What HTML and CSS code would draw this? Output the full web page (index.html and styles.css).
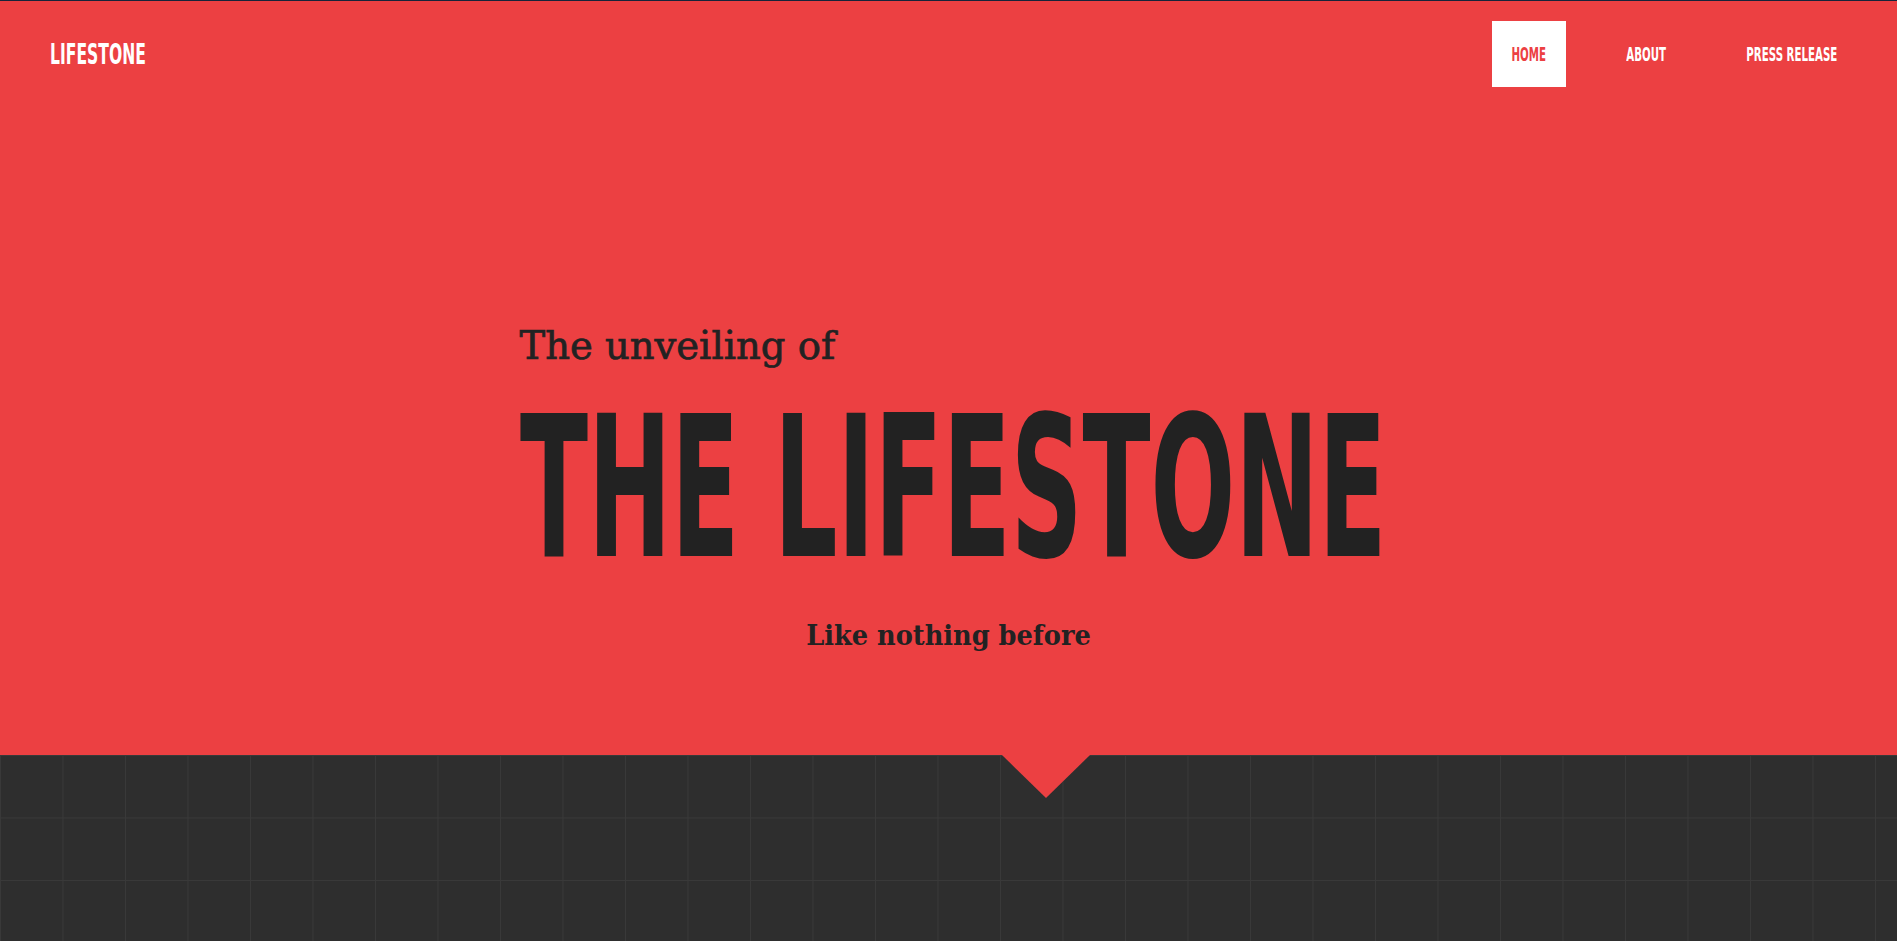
FILE: index.html
```html
<!DOCTYPE html>
<html lang="en">
<head>
<meta charset="utf-8">
<title>Lifestone</title>
<link rel="stylesheet" href="styles.css">
</head>
<body>
<section class="hero">
  <header class="topbar">
    <a class="logo" href="#"><span class="squeeze">LIFESTONE</span></a>
    <nav class="nav">
      <a class="nav-link nav-home active" href="#"><span class="squeeze">HOME</span></a>
      <a class="nav-link nav-about" href="#"><span class="squeeze">ABOUT</span></a>
      <a class="nav-link nav-press" href="#"><span class="squeeze">PRESS RELEASE</span></a>
    </nav>
  </header>
  <div class="intro">
    <p class="pre">The unveiling of</p>
    <h1 class="title"><span class="title-text">THE LIFESTONE</span></h1>
    <p class="tagline">Like nothing before</p>
  </div>
</section>
<section class="grid-area">
  <div class="pointer"></div>
</section>
</body>
</html>
```

FILE: styles.css
```css
html, body {
  margin: 0;
  padding: 0;
}
body {
  background: #2e2e2e;
  font-family: "DejaVu Sans", sans-serif;
  overflow-x: hidden;
}
.hero {
  background: #ec4042;
  border-top: 1px solid #16243a;
  height: 754px;
  overflow: hidden;
}
.topbar {
  display: flex;
  justify-content: space-between;
  align-items: center;
  padding: 20px 39px 21px 50px;
  height: 66px;
}
.squeeze {
  display: inline-block;
  white-space: nowrap;
  transform: scaleX(0.6);
}
.logo {
  color: #fff;
  text-decoration: none;
  font-family: "DejaVu Sans Condensed", "DejaVu Sans", sans-serif;
  font-weight: bold;
  font-size: 27.5px;
  line-height: 30px;
  width: 94px;
}
.logo .squeeze {
  transform: scaleX(0.63);
  transform-origin: left center;
}
.nav {
  display: flex;
  gap: 41px;
}
.nav-link {
  display: flex;
  justify-content: center;
  align-items: center;
  height: 66px;
  color: #fff;
  text-decoration: none;
  font-family: "DejaVu Sans Condensed", "DejaVu Sans", sans-serif;
  font-weight: bold;
  font-size: 19px;
}
.nav-link .squeeze {
  transform-origin: center center;
}
.nav-home { width: 74px; }
.nav-about { width: 78px; }
.nav-press { width: 132px; }
.nav-link.active {
  background: #fff;
  color: #ec4042;
}
.intro {
  width: 858px;
  margin: 214px auto 0;
  color: #222;
}
.pre {
  margin: 0;
  font-family: "DejaVu Serif", serif;
  font-size: 38.5px;
  line-height: 48px;
  -webkit-text-stroke: 0.7px #222;
}
.title {
  margin: 43px 0 0;
  font-family: "DejaVu Sans Condensed", "DejaVu Sans", sans-serif;
  font-weight: bold;
  font-size: 196px;
  line-height: 150px;
  white-space: nowrap;
}
.title-text {
  display: inline-block;
  transform: scaleX(0.565);
  transform-origin: left center;
}
.tagline {
  margin: 52px 0 0;
  text-align: center;
  font-family: "DejaVu Serif Condensed", "DejaVu Serif", serif;
  font-weight: bold;
  font-size: 28.5px;
  line-height: 40px;
}
.grid-area {
  position: relative;
  height: 400px;
  background-color: #2e2e2e;
  background-image:
    linear-gradient(to right, #393939 1px, transparent 1px),
    linear-gradient(to bottom, #393939 1px, transparent 1px);
  background-size: 62.5px 62.5px;
}
.pointer {
  position: absolute;
  top: 0;
  left: calc(50% + 53px);
  width: 0;
  height: 0;
  border-left: 44px solid transparent;
  border-right: 44px solid transparent;
  border-top: 43px solid #ec4042;
}
```
